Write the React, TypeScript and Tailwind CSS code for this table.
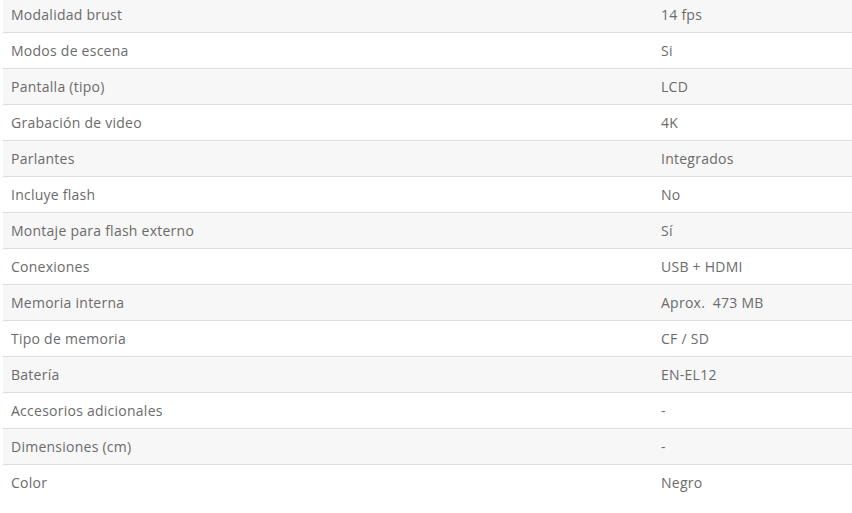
import React from "react";

const rows: [string, string][] = [
  ["Modalidad brust", "14 fps"],
  ["Modos de escena", "Si"],
  ["Pantalla (tipo)", "LCD"],
  ["Grabación de video", "4K"],
  ["Parlantes", "Integrados"],
  ["Incluye flash", "No"],
  ["Montaje para flash externo", "Sí"],
  ["Conexiones", "USB + HDMI"],
  ["Memoria interna", "Aprox.  473 MB"],
  ["Tipo de memoria", "CF / SD"],
  ["Batería", "EN-EL12"],
  ["Accesorios adicionales", "-"],
  ["Dimensiones (cm)", "-"],
  ["Color", "Negro"],
];

export default function App() {
  return (
    <div className="w-[852px] h-[513px] overflow-hidden bg-white">
      <div
        className="ml-[3px] -mt-[4px] text-[14px] tracking-[0.25px] text-[#6b6b6b]"
        style={{ fontFamily: '"Open Sans", "Liberation Sans", sans-serif' }}
      >
        {rows.map(([k, v], i) => (
          <div
            key={i}
            className={`flex items-center h-[36px] border-t border-[#dddddd] ${
              i % 2 === 0 ? "bg-[#f7f7f7]" : "bg-white"
            }`}
          >
            <div className="w-[650px] pl-[8px] whitespace-pre">{k}</div>
            <div className="flex-1 pl-[8px] whitespace-pre">{v}</div>
          </div>
        ))}
      </div>
    </div>
  );
}
